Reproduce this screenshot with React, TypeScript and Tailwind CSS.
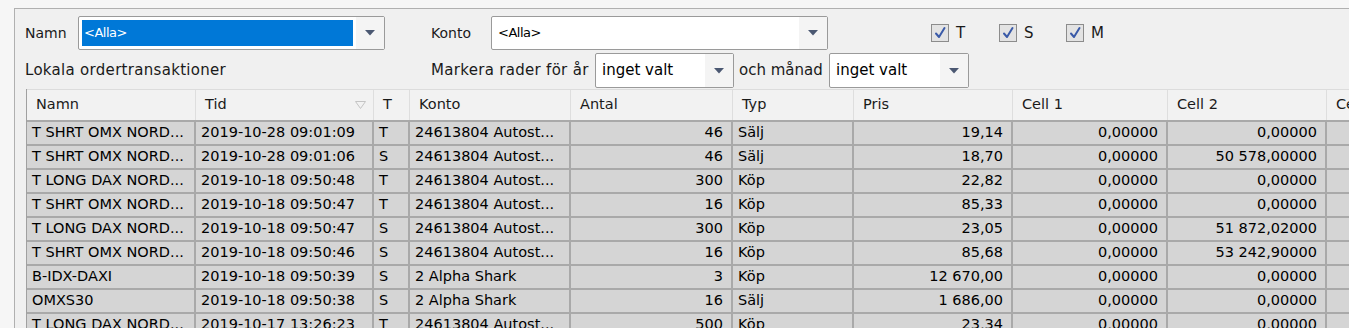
import React from "react";

const FONT = { fontFamily: '"DejaVu Sans", Verdana, sans-serif' };

function Arrow() {
  return (
    <svg width="10" height="6" viewBox="0 0 10 6" className="block">
      <path d="M0 0 L10 0 L5 5.5 Z" fill="#4b5872" />
    </svg>
  );
}

function Combo({
  width,
  height,
  text,
  selected,
  small,
}: {
  width: string;
  height: string;
  text: string;
  selected?: boolean;
  small?: boolean;
}) {
  return (
    <div
      className={`${width} ${height} flex shrink-0 rounded-[2px] border border-[#9a9a9a] bg-white`}
    >
      <div className="flex flex-1 items-stretch p-[3px]">
        {selected ? (
          <div className="flex flex-1 items-center bg-[#0078d7] pl-[2px] text-[13px] tracking-[-0.5px] text-white">
            {text}
          </div>
        ) : (
          <div
            className={`flex flex-1 items-center pl-[3px] text-black ${
              small ? "text-[13px] tracking-[-0.5px]" : "text-[15px]"
            }`}
          >
            {text}
          </div>
        )}
      </div>
      <div className="flex w-[28px] items-center justify-center bg-[#f4f4f4]">
        <Arrow />
      </div>
    </div>
  );
}

function Check({ label, w }: { label: string; w: string }) {
  return (
    <div className={`flex ${w} shrink-0 items-center`}>
      <div className="flex h-[18px] w-[18px] items-center justify-center border border-[#8c8c8c] bg-[#e3e3e3]">
        <svg width="14" height="14" viewBox="0 0 14 14">
          <path
            d="M3 7.5 L6 11 L11.5 2"
            fill="none"
            stroke="#3a5aa8"
            strokeWidth="2"
            strokeLinecap="round"
            strokeLinejoin="round"
          />
        </svg>
      </div>
      <span className="ml-[7px] text-[15px] text-[#1a1a1a]">{label}</span>
    </div>
  );
}

const COLS = "grid-cols-[169px_178px_36px_161px_162px_121px_159px_155px_159px_160px]";

const headers = ["Namn", "Tid", "T", "Konto", "Antal", "Typ", "Pris", "Cell 1", "Cell 2", "Cell 3"];

const rows: string[][] = [
  ["T SHRT OMX NORD...", "2019-10-28 09:01:09", "T", "24613804 Autost...", "46", "Sälj", "19,14", "0,00000", "0,00000"],
  ["T SHRT OMX NORD...", "2019-10-28 09:01:06", "S", "24613804 Autost...", "46", "Sälj", "18,70", "0,00000", "50 578,00000"],
  ["T LONG DAX NORD...", "2019-10-18 09:50:48", "T", "24613804 Autost...", "300", "Köp", "22,82", "0,00000", "0,00000"],
  ["T SHRT OMX NORD...", "2019-10-18 09:50:47", "T", "24613804 Autost...", "16", "Köp", "85,33", "0,00000", "0,00000"],
  ["T LONG DAX NORD...", "2019-10-18 09:50:47", "S", "24613804 Autost...", "300", "Köp", "23,05", "0,00000", "51 872,02000"],
  ["T SHRT OMX NORD...", "2019-10-18 09:50:46", "S", "24613804 Autost...", "16", "Köp", "85,68", "0,00000", "53 242,90000"],
  ["B-IDX-DAXI", "2019-10-18 09:50:39", "S", "2 Alpha Shark", "3", "Köp", "12 670,00", "0,00000", "0,00000"],
  ["OMXS30", "2019-10-18 09:50:38", "S", "2 Alpha Shark", "16", "Sälj", "1 686,00", "0,00000", "0,00000"],
  ["T LONG DAX NORD...", "2019-10-17 13:26:23", "T", "24613804 Autost...", "500", "Köp", "23,34", "0,00000", "0,00000"],
];

const rightCols = new Set([4, 6, 7, 8]);

export default function App() {
  return (
    <div
      className="flex h-[328px] w-[1349px] flex-col overflow-hidden bg-[#f6f6f6] pl-[14px] pt-[8px]"
      style={FONT}
    >
      <div className="flex flex-1 flex-col overflow-hidden border-l border-t border-[#b0b0b0] bg-[#f0f0f0] pt-[7px]">
        {/* Row 1 */}
        <div className="flex h-[34px] items-center pl-[10px]">
          <span className="w-[53px] shrink-0 text-[14px] text-[#1a1a1a]">Namn</span>
          <Combo width="w-[307px]" height="h-[34px]" text="<Alla>" selected />
          <span className="ml-[46px] w-[60px] shrink-0 text-[14px] text-[#1a1a1a]">Konto</span>
          <Combo width="w-[337px]" height="h-[34px]" text="<Alla>" small />
          <div className="ml-[103px] flex">
            <Check label="T" w="w-[68px]" />
            <Check label="S" w="w-[67px]" />
            <Check label="M" w="w-[60px]" />
          </div>
        </div>
        {/* Row 2 */}
        <div className="mt-[3px] flex h-[35px] items-center pl-[10px]">
          <span className="w-[406px] shrink-0 text-[15px] tracking-[0.3px] text-[#1a1a1a]">Lokala ordertransaktioner</span>
          <span className="w-[164px] shrink-0 text-[15px] tracking-[0.3px] text-[#1a1a1a]">Markera rader för år</span>
          <Combo width="w-[139px]" height="h-[35px]" text="inget valt" />
          <span className="ml-[5px] w-[90px] shrink-0 text-[15px] text-[#1a1a1a]">och månad</span>
          <Combo width="w-[140px]" height="h-[35px]" text="inget valt" />
        </div>
        {/* Table */}
        <div className="ml-[11px] mt-[1px] flex flex-col border-l border-[#a0a0a0] text-[14.5px] text-black">
          <div className={`grid ${COLS} h-[31px] border-t border-[#dcdcdc] bg-[#f2f2f2]`}>
            {headers.map((h, i) => (
              <div
                key={i}
                className="relative flex items-center border-r border-[#dedede] pl-[9px] text-[#1a1a1a]"
              >
                <span>{h}</span>
                {i === 1 && (
                  <svg width="11" height="8" viewBox="0 0 11 8" className="absolute right-[7px] top-[11px]">
                    <path d="M0.5 0.5 L10.5 0.5 L5.5 7.5 Z" fill="none" stroke="#c4c4c4" strokeWidth="1" />
                  </svg>
                )}
              </div>
            ))}
          </div>
          {rows.map((r, ri) => (
            <div key={ri} className={`grid ${COLS} h-[24px] border-t-2 border-[#a9a9a9] bg-[#d5d5d5]`}>
              {headers.map((_, ci) => (
                <div
                  key={ci}
                  className={`flex items-center overflow-hidden whitespace-nowrap border-r-2 border-[#a9a9a9] ${
                    rightCols.has(ci) ? "justify-end pr-[8px]" : "pl-[5px]"
                  }`}
                >
                  {r[ci] ?? ""}
                </div>
              ))}
            </div>
          ))}
        </div>
      </div>
    </div>
  );
}
